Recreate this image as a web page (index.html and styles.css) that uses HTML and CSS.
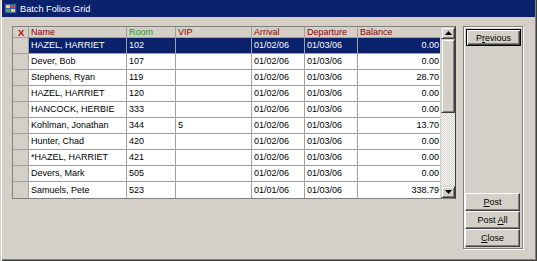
FILE: index.html
```html
<!DOCTYPE html>
<html>
<head>
<meta charset="utf-8">
<link rel="stylesheet" href="styles.css">
</head>
<body>
<div class="window">
  <div class="titlebar">
    <svg class="ticon" width="13" height="13" viewBox="0 0 13 13">
      <rect x="0.5" y="1.5" width="12" height="10" fill="#3a5fb0" stroke="#1a2a70"/>
      <rect x="2" y="3" width="4" height="3" fill="#f6d32d"/>
      <rect x="7" y="3" width="4" height="3" fill="#e03c31"/>
      <rect x="2" y="7" width="4" height="3" fill="#4caf50"/>
      <rect x="7" y="7" width="4" height="3" fill="#f6d32d"/>
    </svg>
    <span class="ttext">Batch Folios Grid</span>
  </div>
  <div class="content">
    <div class="gridbox">
      <div class="grid">
        <div class="c rh hd"><span class="xmark">X</span></div>
        <div class="c hd maroon">Name</div>
        <div class="c hd green">Room</div>
        <div class="c hd maroon">VIP</div>
        <div class="c hd maroon">Arrival</div>
        <div class="c hd maroon">Departure</div>
        <div class="c hd maroon last">Balance</div>

        <div class="c rh"></div><div class="c sel">HAZEL, HARRIET</div><div class="c sel">102</div><div class="c sel"></div><div class="c sel">01/02/06</div><div class="c sel">01/03/06</div><div class="c sel num last">0.00</div>
        <div class="c rh"></div><div class="c">Dever, Bob</div><div class="c">107</div><div class="c"></div><div class="c">01/02/06</div><div class="c">01/03/06</div><div class="c num last">0.00</div>
        <div class="c rh"></div><div class="c">Stephens, Ryan</div><div class="c">119</div><div class="c"></div><div class="c">01/02/06</div><div class="c">01/03/06</div><div class="c num last">28.70</div>
        <div class="c rh"></div><div class="c">HAZEL, HARRIET</div><div class="c">120</div><div class="c"></div><div class="c">01/02/06</div><div class="c">01/03/06</div><div class="c num last">0.00</div>
        <div class="c rh"></div><div class="c">HANCOCK, HERBIE</div><div class="c">333</div><div class="c"></div><div class="c">01/02/06</div><div class="c">01/03/06</div><div class="c num last">0.00</div>
        <div class="c rh"></div><div class="c">Kohlman, Jonathan</div><div class="c">344</div><div class="c">5</div><div class="c">01/02/06</div><div class="c">01/03/06</div><div class="c num last">13.70</div>
        <div class="c rh"></div><div class="c">Hunter, Chad</div><div class="c">420</div><div class="c"></div><div class="c">01/02/06</div><div class="c">01/03/06</div><div class="c num last">0.00</div>
        <div class="c rh"></div><div class="c">*HAZEL, HARRIET</div><div class="c">421</div><div class="c"></div><div class="c">01/02/06</div><div class="c">01/03/06</div><div class="c num last">0.00</div>
        <div class="c rh"></div><div class="c">Devers, Mark</div><div class="c">505</div><div class="c"></div><div class="c">01/02/06</div><div class="c">01/03/06</div><div class="c num last">0.00</div>
        <div class="c rh br"></div><div class="c br">Samuels, Pete</div><div class="c br">523</div><div class="c br"></div><div class="c br">01/01/06</div><div class="c br">01/03/06</div><div class="c num last br">338.79</div>
      </div>
      <div class="scrollbar">
        <div class="sbtn"><svg width="7" height="4" viewBox="0 0 7 4"><path d="M3.5 0L7 4H0Z" fill="#000"/></svg></div>
        <div class="thumb"></div>
        <div class="track"></div>
        <div class="sbtn"><svg width="7" height="4" viewBox="0 0 7 4"><path d="M0 0H7L3.5 4Z" fill="#000"/></svg></div>
      </div>
    </div>
    <div class="panel">
      <button class="btn default"><span>P<u>r</u>evious</span></button>
      <div class="bottombtns">
        <button class="btn"><span><u>P</u>ost</span></button>
        <button class="btn"><span>Post <u>A</u>ll</span></button>
        <button class="btn"><span><u>C</u>lose</span></button>
      </div>
    </div>
  </div>
</div>
</body>
</html>
```
FILE: styles.css
```css
html, body {
  margin: 0;
  padding: 0;
  background: #d4d0c8;
}
body {
  font-family: "Liberation Sans", Arial, sans-serif;
  font-size: 9px;
  color: #000;
}
.window {
  width: 537px;
  height: 261px;
  box-sizing: border-box;
  background: #d4d0c8;
  box-shadow: inset 1px 0 #d4d0c8, inset 2px 0 #fff, inset -1px -1px #404040, inset -2px -2px #808080;
  display: flex;
  flex-direction: column;
}
.titlebar {
  height: 17px;
  margin: 0 2px 1px 2px;
  background: #0a216c;
  display: flex;
  align-items: center;
  color: #fff;
}
.ticon {
  margin-left: 2px;
  margin-right: 3px;
}
.ttext {
  font-size: 9.2px;
  padding-top: 1px;
}
.content {
  display: flex;
  align-items: flex-start;
  padding: 8px 0 0 12px;
}
.gridbox {
  display: flex;
  border: 1px solid #808080;
  border-right-color: #404040;
  background: #fff;
}
.grid {
  display: grid;
  grid-template-columns: 16px 98px 49px 76px 53px 53px 82px;
  grid-template-rows: 11px repeat(10, 16px);
  width: 427px;
}
.c {
  box-sizing: border-box;
  border-right: 1px solid #a0a0a0;
  border-bottom: 1px solid #a0a0a0;
  padding: 0 1px 0 2px;
  white-space: nowrap;
  overflow: hidden;
  display: flex;
  align-items: center;
  line-height: 1;
  background: #fff;
}
.c.last { border-right: none; }
.c.br { border-bottom: none; }
.c.rh { background: #d4d0c8; }
.c.hd { background: #d4d0c8; padding-top: 1px; }
.maroon { color: #8b0000; }
.green { color: #1e9a1e; }
.xmark {
  color: #c00000;
  font-weight: bold;
  font-size: 9.5px;
  margin-left: 3px;
}
.c.sel { background: #0a216c; color: #fff; }
.c.num { justify-content: flex-end; padding-right: 1px; }

.scrollbar {
  width: 14px;
  display: flex;
  flex-direction: column;
  border-left: 1px solid #d4d0c8;
  background: repeating-conic-gradient(#ffffff 0 25%, #d4d0c8 0 50%) 0 0 / 2px 2px;
}
.sbtn {
  height: 12px;
  box-sizing: border-box;
  background: #d4d0c8;
  border: 1px solid;
  border-color: #d4d0c8 #404040 #404040 #d4d0c8;
  box-shadow: inset 1px 1px #fff, inset -1px -1px #808080;
  display: flex;
  align-items: center;
  justify-content: center;
}
.thumb {
  height: 74px;
  box-sizing: border-box;
  background: #d4d0c8;
  border: 1px solid;
  border-color: #d4d0c8 #404040 #404040 #d4d0c8;
  box-shadow: inset 1px 1px #fff, inset -1px -1px #808080;
}
.track { flex: 1; }

.panel {
  margin-left: 7px;
  width: 60px;
  height: 223px;
  box-sizing: border-box;
  border: 1px solid #808080;
  box-shadow: inset 1px 1px #fff, 1px 1px #fff;
  display: flex;
  flex-direction: column;
  justify-content: space-between;
  padding: 2px 1px 1px 2px;
}
.btn {
  font-family: "Liberation Sans", Arial, sans-serif;
  font-size: 9px;
  color: #000;
  background: #d4d0c8;
  width: 55px;
  height: 18px;
  box-sizing: border-box;
  padding: 0;
  border: 1px solid;
  border-color: #fff #404040 #404040 #fff;
  box-shadow: inset -1px -1px #808080;
  display: flex;
  align-items: center;
  justify-content: center;
  white-space: pre;
}
.btn.default {
  height: 17px;
  border-color: #000;
  box-shadow: inset 1px 1px #fff, inset -1px -1px #404040, inset -2px -2px #808080;
}
.bottombtns {
  display: flex;
  flex-direction: column;
  margin-left: -1px;
}
```
